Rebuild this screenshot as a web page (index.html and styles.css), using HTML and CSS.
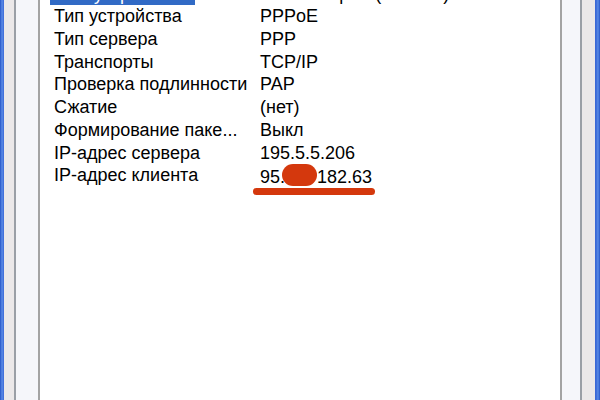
FILE: index.html
```html
<!DOCTYPE html>
<html lang="ru">
<head>
    <meta charset="UTF-8">
    <title>Сведения о подключении</title>
    <link rel="stylesheet" href="styles.css">
</head>
<body>
    <div class="window">
        <div class="face">
            <div class="tab-page">
                <div class="listview">
                    <div class="rows">
                        <div class="row">
                            <div class="name"><span class="selected">Имя устройства</span></div>
                            <div class="value">WAN Miniport (PPPOE)</div>
                        </div>
                        <div class="row">
                            <div class="name">Тип устройства</div>
                            <div class="value">PPPoE</div>
                        </div>
                        <div class="row">
                            <div class="name">Тип сервера</div>
                            <div class="value">PPP</div>
                        </div>
                        <div class="row">
                            <div class="name">Транспорты</div>
                            <div class="value">TCP/IP</div>
                        </div>
                        <div class="row">
                            <div class="name">Проверка подлинности</div>
                            <div class="value">PAP</div>
                        </div>
                        <div class="row">
                            <div class="name">Сжатие</div>
                            <div class="value">(нет)</div>
                        </div>
                        <div class="row">
                            <div class="name">Формирование паке...</div>
                            <div class="value">Выкл</div>
                        </div>
                        <div class="row">
                            <div class="name">IP-адрес сервера</div>
                            <div class="value">195.5.5.206</div>
                        </div>
                        <div class="row">
                            <div class="name">IP-адрес клиента</div>
                            <div class="value">95.<span class="blot"></span>182.63</div>
                        </div>
                    </div>
                    <!-- красная черта под адресом -->
                    <div class="mark"></div>
                </div>
            </div>
        </div>
    </div>
</body>
</html>
```

FILE: styles.css
```css
html, body {
    margin: 0;
    padding: 0;
    height: 400px;
    overflow: hidden;
}
body {
    font-family: "Liberation Sans", Arial, sans-serif;
    font-size: 18px;
    color: #000;
}
.window {
    height: 400px;
    padding: 0 5px 0 4px;
    background: linear-gradient(to right, #2453c6 0, #5b8be6 2px, #3a68d6 4px, #3a68d6 596px, #5b8be6 598px, #2453c6 600px);
}
.face {
    height: 100%;
    padding: 0 13px 0 10px;
    background-color: #ebe8e9;
}
.tab-page {
    height: 100%;
    padding: 0 18px 0 22px;
    border-left: 2px solid #9a9fa6;
    border-right: 2px solid #9a9fa6;
    background-color: #f5f6fa;
}
.listview {
    height: 100%;
    border-left: 2px solid #a3a3a3;
    border-right: 2px solid #a3a3a3;
    background-color: #fff;
    overflow: hidden;
}
.rows {
    margin-top: -17.3px;
}
.row {
    display: flex;
    line-height: 22.7px;
    height: 22.7px;
    white-space: nowrap;
}
.name {
    width: 201px;
    margin-left: 10px;
    padding-left: 4px;
    overflow: hidden;
}
.value {
    padding-left: 5px;
}
.selected {
    display: inline-block;
    margin-left: -4px;
    padding: 0 8px 0 4px;
    background-color: #316ac5;
    color: #fff;
}
.blot {
    display: inline-block;
    width: 35px;
    height: 22px;
    margin-left: -3px;
    vertical-align: -3px;
    border-radius: 12px;
    background-color: #d4380d;
}
.mark {
    width: 122px;
    height: 7px;
    margin: 1px 0 0 213px;
    border-radius: 4px;
    background-color: #d4380d;
}
```
